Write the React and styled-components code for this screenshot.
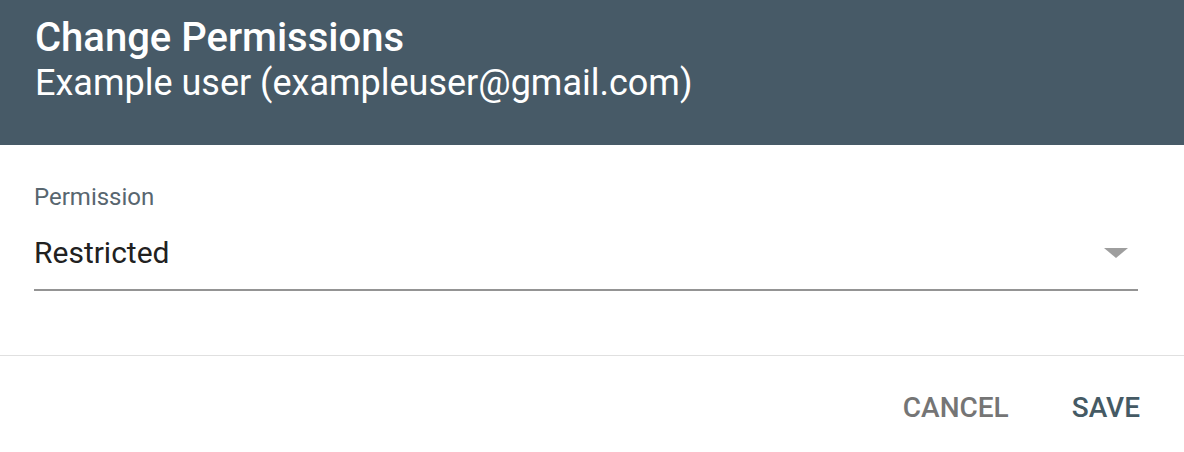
import React, { useState } from "react";
import styled, { createGlobalStyle } from "styled-components";

const GlobalStyle = createGlobalStyle`
  html, body {
    margin: 0;
    padding: 0;
    background: #fff;
    font-family: Roboto, "Liberation Sans", sans-serif;
  }
`;

const Dialog = styled.div`
  width: 1184px;
  height: 452px;
  display: flex;
  flex-direction: column;
  background: #fff;
`;

const Header = styled.div`
  height: 145px;
  box-sizing: border-box;
  padding: 15px 35px 0;
  background: #475a67;
  color: #fff;
`;

const Title = styled.div`
  font-size: 40px;
  font-weight: 500;
  line-height: 46px;
`;

const Subtitle = styled.div`
  font-size: 36px;
  font-weight: 400;
  line-height: 45px;
`;

const Body = styled.div`
  height: 211px;
  box-sizing: border-box;
  padding: 38px 46px 0 34px;
  border-bottom: 1px solid #e0e0e0;
`;

const Label = styled.div`
  font-size: 24px;
  color: #58666f;
  line-height: 28px;
`;

const Select = styled.div`
  display: flex;
  align-items: center;
  justify-content: space-between;
  padding: 24px 0 18px;
  border-bottom: 2px solid #949494;
  cursor: pointer;
`;

const Value = styled.span`
  font-size: 30px;
  line-height: 36px;
  color: #212121;
`;

const Arrow = styled.span`
  width: 0;
  height: 0;
  margin-right: 10px;
  border-left: 12px solid transparent;
  border-right: 12px solid transparent;
  border-top: 10px solid #9e9e9e;
`;

const Footer = styled.div`
  flex: 1;
  display: flex;
  justify-content: flex-end;
  align-items: flex-start;
  gap: 31px;
  padding: 28px 28px 0;
`;

const Button = styled.button`
  background: none;
  border: none;
  padding: 8px 16px;
  font-family: inherit;
  font-size: 28px;
  line-height: 32px;
  font-weight: 500;
  text-transform: uppercase;
  color: ${(p) => (p.primary ? "#455a64" : "#757575")};
  cursor: pointer;
`;

const App = () => {
  const [permission] = useState("Restricted");

  return (
    <>
      <GlobalStyle />
      <Dialog>
        <Header>
          <Title>Change Permissions</Title>
          <Subtitle>Example user (exampleuser@gmail.com)</Subtitle>
        </Header>
        <Body>
          <Label>Permission</Label>
          <Select>
            <Value>{permission}</Value>
            <Arrow />
          </Select>
        </Body>
        <Footer>
          <Button>Cancel</Button>
          <Button primary>Save</Button>
        </Footer>
      </Dialog>
    </>
  );
};

export default App;
